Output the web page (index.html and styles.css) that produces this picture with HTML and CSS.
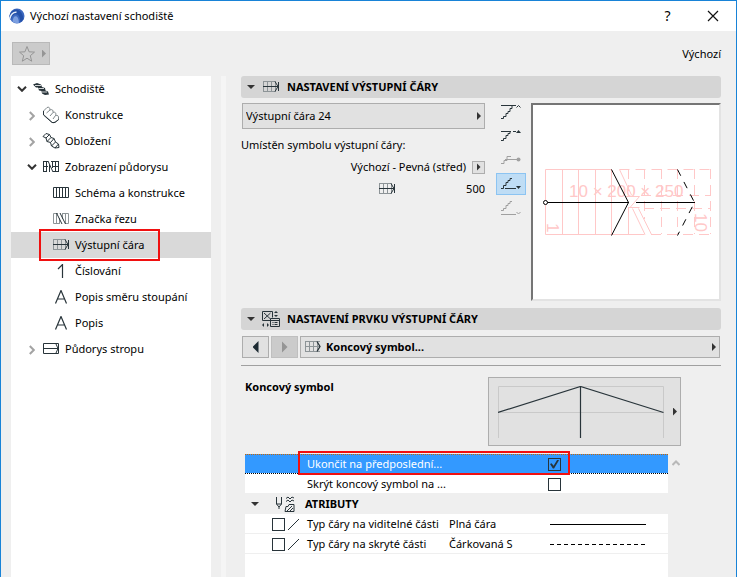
FILE: index.html
```
<!DOCTYPE html>
<html lang="cs">
<head>
  <meta charset="UTF-8" />
  <meta name="viewport" content="width=device-width, initial-scale=1" />
  <title>Výchozí nastavení schodiště</title>
  <link rel="stylesheet" href="styles.css">
</head>
<body>
  <!-- shared icon shapes -->
  <svg class="defs" width="0" height="0" aria-hidden="true">
    <symbol id="i-line" viewBox="0 0 16 12">
      <path d="M.5 1v10M4.5 1v10M8.5 1v10M12.5 1v10M0 .5h13M0 10.5h13" fill="none" stroke="#8d9497"/>
      <path d="M0 5.500h15M12 .5l3 5-3 5M15.500 1v9" fill="none" stroke="#28343a"/>
    </symbol>
    <symbol id="i-end" viewBox="0 0 16 12">
      <path d="M.5 1v10M4.500 1v10M8.500 1v10M12.500 1v10M0 .5h15M0 5.500h15M0 10.500h15" fill="none" stroke="#8d9497"/>
      <path d="M12 .5l3 5-3 5" fill="none" stroke="#28343a" stroke-width="1.300"/>
    </symbol>
    <symbol id="i-letter" viewBox="0 0 12 14">
      <path d="M.5 13.500L6 .5l5.500 13M2.500 9h7" fill="none" stroke="#28343a" stroke-width="1.200"/>
    </symbol>
    <symbol id="i-down" viewBox="0 0 10 6">
      <path d="M1 .8l4 4 4-4" fill="none" stroke="#333" stroke-width="2"/>
    </symbol>
    <symbol id="i-right" viewBox="0 0 6 10">
      <path d="M.8 1l4 4-4 4" fill="none" stroke="#a3a3a3" stroke-width="2"/>
    </symbol>
  </svg>

  <div class="window">
    <header class="titlebar">
      <svg class="logo" width="16" height="16" viewBox="0 0 16 16">
        <circle cx="8" cy="8" r="7.500" fill="#3c68bf"/>
        <path d="M.3 9C1 4 5 .8 8.500 1.800c3.500 1 5.500 5 6 9.500l-3 3C11 9 9.500 6.500 7 6.300 4.500 6.200 2.500 9 1.800 12z" fill="#2450a8"/>
        <path d="M.6 11C1.500 6.500 4.500 3.800 7.500 4.300" fill="none" stroke="#e6eefb" stroke-width="1.500"/>
        <path d="M3.500 13.800C3.800 10 5 8 7 8.200c2 .3 2.800 3.500 3 6.600-2 .9-4.600.4-6.500-1z" fill="#7c9fe0"/>
      </svg>
      <h1>Výchozí nastavení schodiště</h1>
      <button class="title-btn help" aria-label="Nápověda">?</button>
      <button class="title-btn" aria-label="Zavřít">
        <svg width="12" height="12" viewBox="0 0 12 12"><path d="M1 1l10 10M11 1L1 11" stroke="#111" stroke-width="1.200"/></svg>
      </button>
    </header>

    <div class="toolbar">
      <button class="favorite" aria-label="Oblíbené">
        <svg width="18" height="18" viewBox="0 0 18 18"><path d="M9 1.500l2.100 5.300 5.400.3-4.200 3.600 1.400 5.500L9 13.200l-4.700 3 1.400-5.500L1.500 7.100l5.400-.3z" fill="none" stroke="#959595"/></svg>
        <span class="arrow muted"></span>
      </button>
      <span>Výchozí</span>
    </div>

    <div class="content">
      <nav class="tree">
        <button class="node">
          <svg class="chevron" width="10" height="6"><use href="#i-down"/></svg>
          <svg class="icon" width="16" height="14" viewBox="0 0 16 14"><path d="M0 2.500L4 1l4 1.500 1 2.500 3 1 .5 2.500L15 9.500l1 3-4 .5-3-1.500L8.500 9 6 8.500 5 5.500 3 5.500z" fill="#28343a"/><path d="M2 3.500h6M5.500 6.500h5.500M9 10h5" stroke="#fff" stroke-width=".8"/></svg>
          Schodiště
        </button>
        <button class="node level-1">
          <svg class="chevron" width="6" height="10"><use href="#i-right"/></svg>
          <svg class="icon" width="18" height="18" viewBox="0 0 18 18"><path d="M5 1.500c2-1 3 .5 3 2.500 2-1 3.500 0 3 2.500 2-1 3.500.5 2.500 3 2-.5 3.500.5 3 2.500M5 1.500L1.500 5v3.500L11 17l5.500-3v-3M8 4L4.500 7M11 6.500L8 10m5.500-.5L11 13" fill="none" stroke="#80888b"/><path d="M1.500 5v4l8.500 7.500h3l3.500-3" fill="none" stroke="#28343a"/></svg>
          Konstrukce
        </button>
        <button class="node level-1">
          <svg class="chevron" width="6" height="10"><use href="#i-right"/></svg>
          <svg class="icon" width="18" height="18" viewBox="0 0 18 18"><path d="M1 4.500L4 1.500l3.500 1L4 6zM4 6l1 3.500L9 5.500 7.500 2.500M5 9.500l3.500 1L12 6.500 9 5.500M8.500 10.500l1 3.500L13.500 10 12 6.500M9.500 14l3.500 2 3.500-4-3-2M13 16l4-.5-.5-3.500" fill="none" stroke="#28343a"/></svg>
          Obložení
        </button>
        <button class="node level-1">
          <svg class="chevron" width="10" height="6"><use href="#i-down"/></svg>
          <svg class="icon" width="16" height="12" viewBox="0 0 16 12"><path d="M.5 0v11M3.500 0v11M0 .5h5M0 10.500h4M0 5.500h5M5 0l5 11M6.500 4v7M9.500 0v7M8 .5h8M12.500 0v11M15.500 0v11M10 5.500h6M10 10.500h6" fill="none" stroke="#28343a"/></svg>
          Zobrazení půdorysu
        </button>
        <button class="node level-2">
          <svg class="icon" width="16" height="12" viewBox="0 0 16 12"><path d="M.5.5h15v10H.5zM3.500 0v11M6.500 0v11M9.500 0v11M12.500 0v11" fill="none" stroke="#28343a"/></svg>
          Schéma a konstrukce
        </button>
        <button class="node level-2">
          <svg class="icon" width="16" height="12" viewBox="0 0 16 12"><path d="M5 .5H.5v10h6M3.500 0v11M6.500 5v6M10 .5h5.500v10H12M9.500 0v6M12.500 0v11" fill="none" stroke="#8d9497"/><path d="M3.500 0l5.500 11M7 0l5.500 11" fill="none" stroke="#28343a"/></svg>
          Značka řezu
        </button>
        <button class="node level-2 selected">
          <svg class="icon" width="16" height="12"><use href="#i-line"/></svg>
          Výstupní čára
          <span class="highlight"></span>
        </button>
        <button class="node level-2">
          <svg class="icon" width="16" height="14" viewBox="0 0 16 14"><path d="M5 5l4.500-4.500V14" fill="none" stroke="#28343a" stroke-width="1.200"/></svg>
          Číslování
        </button>
        <button class="node level-2">
          <svg class="icon" width="16" height="14"><use href="#i-letter"/></svg>
          Popis směru stoupání
        </button>
        <button class="node level-2">
          <svg class="icon" width="16" height="14"><use href="#i-letter"/></svg>
          Popis
        </button>
        <button class="node level-1">
          <svg class="chevron" width="6" height="10"><use href="#i-right"/></svg>
          <svg class="icon" width="16" height="12" viewBox="0 0 16 12"><path d="M.5.5h15v10H.5zM0 5.500h15M13 1l2 4.500-2 4.500" fill="none" stroke="#28343a"/></svg>
          Půdorys stropu
        </button>
      </nav>

      <div class="splitter"></div>

      <main>
        <h2 class="section">
          <span class="arrow down"></span>
          <svg class="section-icon" width="16" height="12"><use href="#i-line"/></svg>
          NASTAVENÍ VÝSTUPNÍ ČÁRY
        </h2>

        <div class="walkline">
          <div class="fields">
            <div class="dropdown">
              <select aria-label="Výstupní čára"><option>Výstupní čára 24</option></select>
            </div>
            <label for="offset">Umístěn symbolu výstupní čáry:</label>
            <div class="field-row">
              <span>Výchozí - Pevná (střed)</span>
              <button class="mini" aria-label="Vybrat umístění"><span class="arrow"></span></button>
            </div>
            <div class="field-row offset">
              <svg width="16" height="12"><use href="#i-line"/></svg>
              <input id="offset" type="text" value="500">
            </div>
          </div>

          <div class="modes">
            <button aria-label="Celé nad řezem"><svg width="20" height="14" viewBox="0 0 20 14"><path d="M0 .5h15" stroke="#28343a"/><path d="M0 13.500h2.500v-2H5v-3h2v-2h2v-3h2V1" fill="none" stroke="#28343a"/><path d="M15.500 2.500L17.500.5l2 2" fill="none" stroke="#28343a"/></svg></button>
            <button aria-label="Nad řezem"><svg width="20" height="14" viewBox="0 0 20 14"><path d="M0 2.500h10M12 2.500h3" stroke="#28343a"/><path d="M0 11.500h2.500v-2H5v-3h2v-2h2v-2" fill="none" stroke="#28343a"/><path d="M15 4l2.500-3L20 4z" fill="#28343a"/></svg></button>
            <button aria-label="V řezu"><svg width="20" height="14" viewBox="0 0 20 14"><path d="M0 10.500h3v-3h3v-4h4M4 6.500h14" fill="none" stroke="#a0a0a0"/><circle cx="17.500" cy="6.500" r="2" fill="#a0a0a0"/></svg></button>
            <button class="active" aria-label="Pod řezem"><svg width="20" height="14" viewBox="0 0 20 14"><path d="M4 11.500h11M0 11.500h2.500v-3H5v-3h2v-2h2v-2h2" fill="none" stroke="#28343a"/><path d="M15 9h5l-2.500 3z" fill="#28343a"/></svg></button>
            <button aria-label="Celé pod řezem"><svg width="20" height="14" viewBox="0 0 20 14"><path d="M0 13.500h15M0 9.500h2.500v-2H5v-3h2v-2h2v-2h2M15.500 11l2 2 2-2" fill="none" stroke="#a0a0a0"/></svg></button>
          </div>

          <div class="preview">
            <svg width="186" height="194" viewBox="0 0 186 194">
              <g fill="none" stroke="#ffc8c8">
                <path d="M78.500 64.500h-66v65h99M29.500 64v65M45.500 64v65M62.500 64v65M78.500 64v65M95.500 103v26"/>
                <path d="M86.500 64.500L98.500 90M93 91.500h13.500L97 102.500M95 102.500h11.500M99.500 103.500l12.500 26M105.500 103.500l13 26"/>
                <path d="M86.500 64.500h91M95.500 64v22M111.500 64v50M128.500 64v65M144.500 64v65M161.500 64v65M177.500 64v65M108 90.500h70M111 103.500h67M118 129.500h60" stroke-dasharray="10 6"/>
              </g>
              <text class="plan-text" x="36" y="92">10 × 200 × 250</text>
              <text class="plan-text" transform="translate(14 118) rotate(90)">1</text>
              <text class="plan-text" transform="translate(162 108) rotate(90)">10</text>
              <g fill="none" stroke="#000">
                <path d="M13 97.500h83M103 97.500h59"/>
                <path d="M78.500 64.500l17 33-17 33"/>
                <path d="M144.500 64.500l17 33-17 33" stroke-dasharray="7 7"/>
                <circle cx="12.500" cy="97.500" r="2" fill="#fff"/>
              </g>
            </svg>
          </div>
        </div>

        <h2 class="section">
          <span class="arrow down"></span>
          <svg class="section-icon" width="18" height="16" viewBox="0 0 18 16"><path d="M8 9.500H.5v-9h10v6M2 2l6.500 6M8.500 2L2 8M8.500 7.500h9v8h-9zM9 9.500h8M10.500 11.500h1M12.500 11.500h3M10.500 13.500h1M12.500 13.500h3" fill="none" stroke="#28343a"/><path d="M12 2h4l-2-2zM12 4h4l-2 2zM2 12v4l-2-2zM5 12v4l2-2z" fill="#28343a"/></svg>
          NASTAVENÍ PRVKU VÝSTUPNÍ ČÁRY
        </h2>

        <div class="pager">
          <button aria-label="Předchozí"><span class="arrow left"></span></button>
          <button aria-label="Další" disabled><span class="arrow big muted"></span></button>
          <div class="dropdown">
            <svg width="16" height="12"><use href="#i-end"/></svg>
            <select class="page-select" aria-label="Stránka nastavení"><option>Koncový symbol...</option></select>
          </div>
        </div>

        <div class="symbol">
          <h3>Koncový symbol</h3>
          <button class="symbol-btn" aria-label="Koncový symbol">
            <svg width="167" height="52" viewBox="0 0 167 52"><path d="M.5 52V.5h165V52M0 26.500h166" fill="none" stroke="#c9c9c9"/><path d="M0 26.500L82.500.5l83 26M82.500 1v51" fill="none" stroke="#28343a" stroke-width="1.200"/></svg>
            <span class="arrow"></span>
          </button>
        </div>

        <div class="list">
          <div class="list-body">
            <table>
              <colgroup><col class="c-pick"><col class="c-name"><col class="c-value"><col></colgroup>
              <tr class="current">
                <td></td>
                <td colspan="2"><label for="finish">Ukončit na předposlední...</label></td>
                <td><input id="finish" type="checkbox" checked></td>
              </tr>
              <tr>
                <td></td>
                <td colspan="2"><label for="hide">Skrýt koncový symbol na ...</label></td>
                <td><input id="hide" type="checkbox"></td>
              </tr>
              <tr class="group">
                <th colspan="4">
                  <div class="group-title">
                    <span class="arrow down"></span>
                    <svg width="20" height="16" viewBox="0 0 20 16"><path d="M1.500 1v7l2.500 3 2.500-3V1M1.500 8h5M4 11v2M11 2.500l2-1.500 2 2 2-2 2 1M11 5.500l2-1.500 2 2 2-2 2 1" fill="none" stroke="#28343a"/><path d="M10 15.500h9v-7h-5l-1 2h-2zM12 15l5-5M15 15l3-3" fill="none" stroke="#28343a"/></svg>
                    ATRIBUTY
                  </div>
                </th>
              </tr>
              <tr>
                <td>
                  <div class="pick">
                    <input id="visible" type="checkbox">
                    <svg width="11" height="11" viewBox="0 0 11 11"><path d="M0 11L11 0" stroke="#28343a"/></svg>
                  </div>
                </td>
                <td><label for="visible">Typ čáry na viditelné části</label></td>
                <td>Plná čára</td>
                <td><div class="sample"></div></td>
              </tr>
              <tr>
                <td>
                  <div class="pick">
                    <input id="hidden" type="checkbox">
                    <svg width="11" height="11" viewBox="0 0 11 11"><path d="M0 11L11 0" stroke="#28343a"/></svg>
                  </div>
                </td>
                <td><label for="hidden">Typ čáry na skryté části</label></td>
                <td>Čárkovaná S</td>
                <td><div class="sample dashed"></div></td>
              </tr>
            </table>
            <span class="highlight"></span>
          </div>
          <div class="scroll">
            <svg width="8" height="6" viewBox="0 0 8 6"><path d="M.5 5L4 1.500 7.500 5" fill="none" stroke="#b8b8b8" stroke-width="2"/></svg>
          </div>
        </div>
      </main>
    </div>
  </div>
</body>
</html>
```
FILE: styles.css
```
* {
  box-sizing: border-box;
}
body {
  margin: 0;
  font-family: "Noto Sans", "Open Sans", sans-serif;
  font-size: 11px;
  line-height: 16px;
  color: #000;
}
button, input, select {
  font: inherit;
  color: inherit;
  margin: 0;
  padding: 0;
  border: none;
  background: none;
}
h1, h2, h3 {
  margin: 0;
  font-size: 11px;
}
svg {
  flex: none;
  display: block;
}
.defs {
  position: absolute;
}
.window {
  display: flex;
  flex-direction: column;
  min-height: 100vh;
  background: #efefef;
  border: 1px solid #1883d7;
  border-bottom: none;
}

/* Title bar */
.titlebar {
  display: flex;
  align-items: center;
  height: 30px;
  padding: 0 1px 0 8px;
  background: #fff;
}
.titlebar h1 {
  flex: 1;
  margin-left: 5px;
  font-weight: normal;
}
.title-btn {
  display: flex;
  align-items: center;
  justify-content: center;
  width: 45px;
  height: 30px;
}
.help {
  font-size: 14px;
}

/* Toolbar */
.toolbar {
  display: flex;
  align-items: center;
  justify-content: space-between;
  height: 45px;
  padding: 0 15px 0 11px;
}
.favorite {
  display: flex;
  align-items: center;
  justify-content: space-between;
  width: 38px;
  height: 23px;
  padding: 0 3px 0 5px;
  background: #cbcbcb;
  border: 1px solid #b9b9b9;
}

/* Small triangles */
.arrow {
  flex: none;
  width: 4px;
  height: 8px;
  background: #333;
  clip-path: polygon(0 0, 100% 50%, 0 100%);
}
.arrow.muted {
  background: #959595;
}
.arrow.big, .arrow.left {
  width: 6px;
  height: 12px;
}
.arrow.left {
  background: #1d2b33;
  clip-path: polygon(100% 0, 0 50%, 100% 100%);
}
.arrow.down {
  width: 8px;
  height: 4px;
  clip-path: polygon(0 0, 100% 0, 50% 100%);
}

.content {
  display: flex;
  flex: 1;
}

/* Tree */
.tree {
  width: 200px;
  margin-left: 10px;
  background: #fff;
}
.node {
  position: relative;
  display: flex;
  align-items: center;
  width: 100%;
  height: 26px;
  padding-left: 6px;
  white-space: nowrap;
}
.node .chevron {
  margin-right: 5px;
}
.node .chevron[width="6"] {
  margin: 2px 7px 0 2px;
}
.node .icon {
  width: 18px;
  margin-right: 5px;
}
.level-1 {
  padding-left: 16px;
}
.level-2 {
  padding-left: 41px;
}
.selected {
  background: #d9d9d9;
}
.highlight {
  position: absolute;
  border: 2px solid #f01010;
  pointer-events: none;
}
.node .highlight {
  left: 28px;
  top: -3px;
  width: 121px;
  height: 32px;
}
.splitter {
  width: 5px;
  margin: 0 15px 0 10px;
  background: #f5f5f5;
}

/* Settings */
main {
  display: flex;
  flex: 1;
  flex-direction: column;
  min-width: 0;
  margin-right: 15px;
}
.section {
  display: flex;
  align-items: center;
  height: 22px;
  padding-left: 6px;
  background: #d5d5d5;
  border-radius: 3px;
}
.section-icon {
  width: 18px;
  margin: 0 7px;
}
.walkline {
  display: flex;
  margin: 5px 0 7px;
}
.fields {
  flex: 1;
  min-width: 0;
}
.dropdown {
  position: relative;
  display: flex;
  align-items: center;
  height: 26px;
  margin-left: 1px;
  background: #e1e1e1;
  border: 1px solid #adadad;
}
.dropdown select {
  flex: 1;
  height: 100%;
  padding: 0 16px 0 3px;
  appearance: none;
}
.dropdown::after {
  content: "";
  position: absolute;
  right: 3px;
  width: 4px;
  height: 8px;
  background: #333;
  clip-path: polygon(0 0, 100% 50%, 0 100%);
  pointer-events: none;
}
.fields label {
  display: block;
  margin: 8px 0 5px;
}
.field-row {
  display: flex;
  align-items: center;
  justify-content: flex-end;
  gap: 6px;
  height: 18px;
}
.mini {
  display: flex;
  align-items: center;
  justify-content: center;
  width: 13px;
  height: 13px;
  background: #e1e1e1;
  border: 1px solid #adadad;
}
.offset {
  height: 26px;
}
.offset input {
  width: 84px;
  text-align: right;
}
.modes {
  display: flex;
  flex-direction: column;
  gap: 2px;
  width: 30px;
  margin: -2px 5px 0 11px;
}
.modes button {
  display: flex;
  align-items: center;
  justify-content: center;
  height: 22px;
}
.modes .active {
  background: #bfddf5;
  border: 1px solid #8cc4f2;
}
.preview {
  width: 190px;
  background: #fff;
  border: 2px solid;
  border-color: #757575 #e3e3e3 #e3e3e3 #757575;
}
.plan-text {
  font: 17px "Liberation Sans", Arial, sans-serif;
  fill: #ffc8c8;
}

/* Pager */
.pager {
  display: flex;
  gap: 2px;
  margin-top: 6px;
  padding: 0 1px 7px;
  border-bottom: 1px solid #a0a0a0;
}
.pager button {
  display: flex;
  align-items: center;
  justify-content: center;
  width: 27px;
  height: 22px;
  background: #e1e1e1;
  border: 1px solid #adadad;
}
.pager button:disabled {
  background: #cbcbcb;
  border-color: #bfbfbf;
}
.pager .dropdown {
  flex: 1;
  height: 22px;
  margin: 0;
  padding-left: 4px;
}
.dropdown .page-select {
  padding-left: 5px;
  font-weight: bold;
}

/* Symbol picker */
.symbol {
  display: flex;
  align-items: flex-start;
  justify-content: space-between;
  margin: 11px 40px 8px 4px;
}
.symbol h3 {
  margin-top: 2px;
}
.symbol-btn {
  display: flex;
  align-items: center;
  justify-content: space-between;
  width: 193px;
  height: 69px;
  padding: 0 3px 0 9px;
  background: #e1e1e1;
  border: 1px solid #adadad;
}

/* Attribute list */
.list {
  display: flex;
  flex: 1;
  margin-left: 4px;
}
.list-body {
  position: relative;
  flex: 1;
  background: #fff;
}
.list-body .highlight {
  left: 53px;
  top: -3px;
  width: 272px;
  height: 24px;
}
.scroll {
  width: 53px;
  padding: 6px 4px;
}
table {
  width: 100%;
  border-collapse: collapse;
  table-layout: fixed;
}
.c-pick {
  width: 62px;
}
.c-name {
  width: 142px;
}
.c-value {
  width: 98px;
}
td, th {
  height: 20px;
  padding: 0;
  line-height: 18px;
  text-align: left;
  vertical-align: middle;
  white-space: nowrap;
  box-shadow: inset 0 -1px #efefef;
}
.current td {
  background: linear-gradient(90deg, #cc6600 50%, #3399ff 50%) 0 0 / 2px 1px repeat-x,
    linear-gradient(90deg, #000 50%, #fff 50%) 0 100% / 2px 1px repeat-x,
    #3399ff;
  color: #fff;
  box-shadow: none;
}
.group th {
  background: #efefef;
}
.group-title {
  display: flex;
  align-items: center;
  gap: 10px;
  padding-left: 6px;
}
.group-title svg {
  margin-left: 6px;
}
td input[type="checkbox"] {
  display: block;
  width: 13px;
  height: 13px;
  margin-left: 1px;
  appearance: none;
  border: 1px solid #28343a;
}
td input:checked::before {
  content: "";
  display: block;
  width: 9px;
  height: 9px;
  margin: 1px;
  background: #28343a;
  clip-path: polygon(0 50%, 18% 42%, 40% 70%, 82% 0, 100% 8%, 45% 100%, 32% 100%);
}
.pick {
  display: flex;
  align-items: center;
  gap: 3px;
  padding-left: 26px;
}
.sample {
  width: 96px;
  height: 1px;
  margin-left: 3px;
  background: #000;
}
.sample.dashed {
  background: repeating-linear-gradient(90deg, #000 0 4px, transparent 4px 7px);
}
```
